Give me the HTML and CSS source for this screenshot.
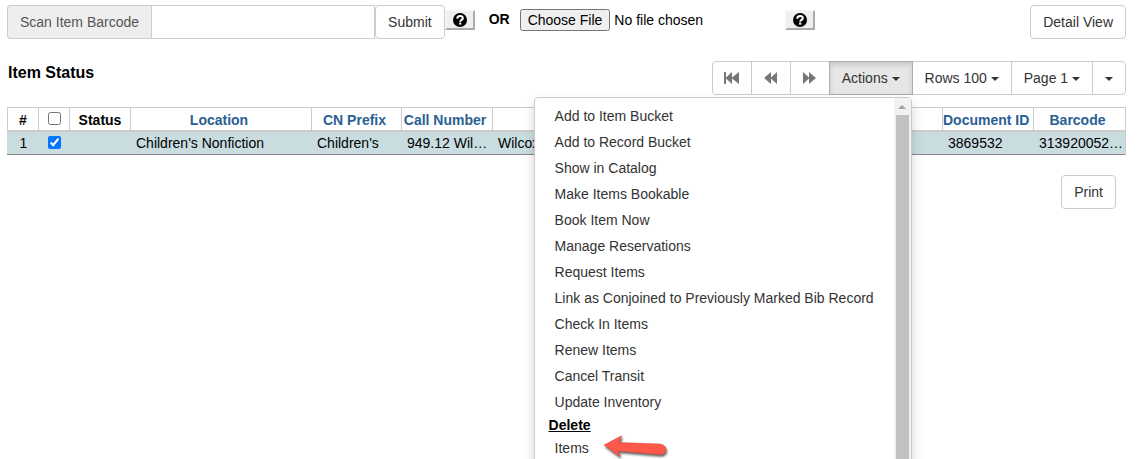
FILE: index.html
```html
<!DOCTYPE html>
<html lang="en">
<head>
  <meta charset="UTF-8">
  <meta name="viewport" content="width=device-width, initial-scale=1.0">
  <title>Item Status</title>
  <link rel="stylesheet" href="styles.css">
</head>
<body>
  <!-- shared icons -->
  <svg class="sprite" aria-hidden="true">
    <symbol id="icon-help" viewBox="0 0 14 14">
      <circle cx="7" cy="7" r="7" fill="#000"/>
      <path d="M4.300 5.800C4.300 3.900 5.400 3.100 7.100 3.100S9.800 4 9.800 5.400C9.800 7 7.200 6.900 7.200 8.800" fill="none" stroke="#fff" stroke-width="2"/>
      <path d="M6.100 9.600h2.200v2H6.100z" fill="#fff"/>
    </symbol>
    <symbol id="icon-first" viewBox="0 0 16 12">
      <path d="M0 0h2v5.500L8 0v5.500L15 0v12L8 6.500V12L2 6.500V12H0z"/>
    </symbol>
    <symbol id="icon-back" viewBox="0 0 14 12">
      <path d="M0 6l7-6v5.500L13 0v12L7 6.500V12z"/>
    </symbol>
    <symbol id="icon-forward" viewBox="0 0 14 12">
      <path d="M13 6L6 0v5.500L0 0v12l6-5.500V12z"/>
    </symbol>
  </svg>

  <main class="page">
    <form class="scan-bar">
      <div class="input-group">
        <label class="addon" for="barcode">Scan Item Barcode</label>
        <input class="barcode-input" type="text" id="barcode">
        <button class="btn" type="button">Submit</button>
      </div>
      <button class="help-btn" type="button" aria-label="Barcode help"><svg><use href="#icon-help"/></svg></button>
      <label class="or" for="barcodeFile">OR</label>
      <input class="file-input" type="file" id="barcodeFile">
      <button class="help-btn" type="button" aria-label="File help"><svg><use href="#icon-help"/></svg></button>
      <button class="btn detail-btn" type="button">Detail View</button>
    </form>

    <div class="grid-bar">
      <h1>Item Status</h1>
      <div class="btn-group">
        <button class="btn page-btn" type="button" aria-label="First page"><svg class="wide"><use href="#icon-first"/></svg></button>
        <button class="btn page-btn" type="button" aria-label="Previous page"><svg><use href="#icon-back"/></svg></button>
        <button class="btn page-btn" type="button" aria-label="Next page"><svg><use href="#icon-forward"/></svg></button>
        <div class="dropdown">
          <button class="btn active" type="button">Actions <span class="caret"></span></button>
          <div class="menu">
            <ul>
              <li><a href="#">Add to Item Bucket</a></li>
              <li><a href="#">Add to Record Bucket</a></li>
              <li><a href="#">Show in Catalog</a></li>
              <li><a href="#">Make Items Bookable</a></li>
              <li><a href="#">Book Item Now</a></li>
              <li><a href="#">Manage Reservations</a></li>
              <li><a href="#">Request Items</a></li>
              <li><a href="#">Link as Conjoined to Previously Marked Bib Record</a></li>
              <li><a href="#">Check In Items</a></li>
              <li><a href="#">Renew Items</a></li>
              <li><a href="#">Cancel Transit</a></li>
              <li><a href="#">Update Inventory</a></li>
              <li class="menu-heading">Delete</li>
              <li class="marked">
                <a href="#">Items</a>
                <svg class="arrow" viewBox="0 0 66 26" aria-hidden="true">
                  <path d="M1 10L18 1Q19 1 18.500 2L16 7.500L57 9Q63 10 63 15Q62 20 56 19.500L15 16L17 20.500Q17 22 16 21Z"/>
                </svg>
              </li>
            </ul>
            <div class="scroll-track">
              <span class="scroll-up"></span>
              <span class="scroll-thumb"></span>
            </div>
          </div>
        </div>
        <button class="btn" type="button">Rows 100 <span class="caret"></span></button>
        <button class="btn" type="button">Page 1 <span class="caret"></span></button>
        <button class="btn" type="button" aria-label="Grid options"><span class="caret"></span></button>
      </div>
    </div>

    <table class="items">
      <colgroup>
        <col class="col-tick"><col class="col-tick"><col class="col-status"><col class="col-location">
        <col class="col-prefix"><col class="col-std"><col><col class="col-std"><col class="col-barcode">
      </colgroup>
      <thead>
        <tr>
          <th>#</th>
          <th><input type="checkbox" aria-label="Select all"></th>
          <th>Status</th>
          <th><a href="#">Location</a></th>
          <th><a href="#">CN Prefix</a></th>
          <th><a href="#">Call Number</a></th>
          <th><a href="#">Title</a></th>
          <th><a href="#">Document ID</a></th>
          <th><a href="#">Barcode</a></th>
        </tr>
      </thead>
      <tbody>
        <tr>
          <td class="center">1</td>
          <td class="center"><input type="checkbox" aria-label="Select row 1" checked></td>
          <td></td>
          <td>Children's Nonfiction</td>
          <td>Children's</td>
          <td>949.12 Wil…</td>
          <td>Wilcox</td>
          <td>3869532</td>
          <td>313920052…</td>
        </tr>
      </tbody>
    </table>

    <div class="footer-bar">
      <button class="btn" type="button">Print</button>
    </div>
  </main>
</body>
</html>
```
FILE: styles.css
```css
* {
  box-sizing: border-box;
}

body {
  margin: 0;
  font-family: "Liberation Sans", Arial, sans-serif;
  font-size: 14px;
  line-height: 20px;
  color: #000;
  background: #fff;
}

button, input {
  font: inherit;
  margin: 0;
}

.sprite {
  display: none;
}

.page {
  height: 100vh;
  padding: 5px 16px 0 7px;
  overflow: hidden;
}

.btn {
  height: 34px;
  padding: 6px 12px;
  color: #333;
  background: #fff;
  border: 1px solid #ccc;
  border-radius: 4px;
  white-space: nowrap;
  cursor: pointer;
}

/* Scan bar */
.scan-bar {
  display: flex;
  align-items: flex-start;
}

.input-group {
  display: flex;
}

.addon {
  height: 34px;
  padding: 6px 12px;
  color: #555;
  background: #eee;
  border: 1px solid #ccc;
  border-right: 0;
  border-radius: 4px 0 0 4px;
}

.barcode-input {
  width: 224px;
  height: 34px;
  padding: 6px 12px;
  border: 1px solid #ccc;
}

.help-btn {
  display: flex;
  justify-content: center;
  align-items: center;
  width: 30px;
  height: 20px;
  margin-top: 5px;
  padding: 0;
  background: #efefef;
  border: 2px solid #f4f4f4;
  border-right-color: #aaa;
  border-bottom-color: #aaa;
}

.help-btn svg {
  width: 14px;
  height: 14px;
}

.or {
  margin: 4px 10px 0 14px;
  font-weight: bold;
}

.file-input {
  width: 265px;
  height: 22px;
  margin-top: 4px;
}

.detail-btn {
  margin-left: auto;
}

/* Title and grid controls */
.grid-bar {
  display: flex;
  justify-content: space-between;
  margin-top: 22px;
}

h1 {
  margin: 0;
  padding-left: 1px;
  font-size: 16px;
  line-height: 24px;
}

.btn-group {
  display: flex;
}

.btn-group .btn {
  border-radius: 0;
}

.btn-group > * + * {
  margin-left: -1px;
}

.btn-group > .btn:first-child {
  border-radius: 4px 0 0 4px;
}

.btn-group > .btn:last-child {
  border-radius: 0 4px 4px 0;
}

.btn-group .page-btn {
  display: flex;
  align-items: center;
  justify-content: center;
  width: 40px;
  padding: 0;
}

.page-btn svg {
  width: 14px;
  height: 12px;
  fill: #777;
}

.page-btn .wide {
  width: 16px;
}

.btn.active {
  background: #e6e6e6;
  border-color: #adadad;
  box-shadow: inset 0 3px 5px rgba(0, 0, 0, 0.125);
}

.caret {
  display: inline-block;
  vertical-align: middle;
  border-top: 4px solid #333;
  border-left: 4px solid transparent;
  border-right: 4px solid transparent;
}

/* Actions menu */
.dropdown {
  position: relative;
  z-index: 1;
}

.menu {
  position: absolute;
  top: 36px;
  right: 1px;
  display: flex;
  width: 378px;
  height: 400px;
  background: #fff;
  border: 1px solid #ccc;
  border-radius: 4px;
  box-shadow: 0 6px 12px rgba(0, 0, 0, 0.175);
}

.menu ul {
  flex: 1;
  margin: 0;
  padding: 5px 0;
  list-style: none;
}

.menu a {
  display: block;
  padding: 3px 20px;
  color: #333;
  text-decoration: none;
  white-space: nowrap;
}

.menu-heading {
  padding-left: 14px;
  font-weight: bold;
  text-decoration: underline;
}

.marked {
  position: relative;
}

.arrow {
  position: absolute;
  top: 0;
  left: 68px;
  width: 66px;
  height: 26px;
  fill: #fd594b;
  stroke: #d9483d;
  stroke-width: 0.5;
  filter: drop-shadow(1px 2px 1px rgba(0, 0, 0, 0.6));
}

.scroll-track {
  display: flex;
  flex-direction: column;
  align-items: center;
  width: 17px;
  background: #f1f1f1;
}

.scroll-up {
  margin: 7px 0 6px;
  border-bottom: 4px solid #a3a3a3;
  border-left: 4px solid transparent;
  border-right: 4px solid transparent;
}

.scroll-thumb {
  flex: 1;
  width: 13px;
  background: #c1c1c1;
}

/* Items table */
.items {
  width: 100%;
  margin-top: 12px;
  table-layout: fixed;
  border-collapse: separate;
  border-spacing: 0;
  border-right: 1px solid #ccc;
}

.col-tick {
  width: 31px;
}

.col-status {
  width: 61px;
}

.col-location {
  width: 181px;
}

.col-prefix {
  width: 90px;
}

.col-std {
  width: 91px;
}

.col-barcode {
  width: 92px;
}

.items th {
  height: 25px;
  padding: 2px 0 0;
  border: 1px solid #ccc;
  border-width: 1px 0 2px 1px;
  white-space: nowrap;
}

.items th a {
  padding-right: 4px;
  color: #2a6093;
  text-decoration: none;
}

.items td {
  height: 23px;
  padding: 0 0 1px 6px;
  background: #c9dde1;
  border-bottom: 1px solid #888;
  white-space: nowrap;
}

.items td.center {
  padding: 0 0 1px 2px;
  text-align: center;
}

.items input {
  display: block;
  width: 13px;
  height: 13px;
  margin: 0 auto;
}

.items th input {
  margin-bottom: 3px;
}

.footer-bar {
  display: flex;
  justify-content: flex-end;
  padding: 20px 10px 0;
}
```
